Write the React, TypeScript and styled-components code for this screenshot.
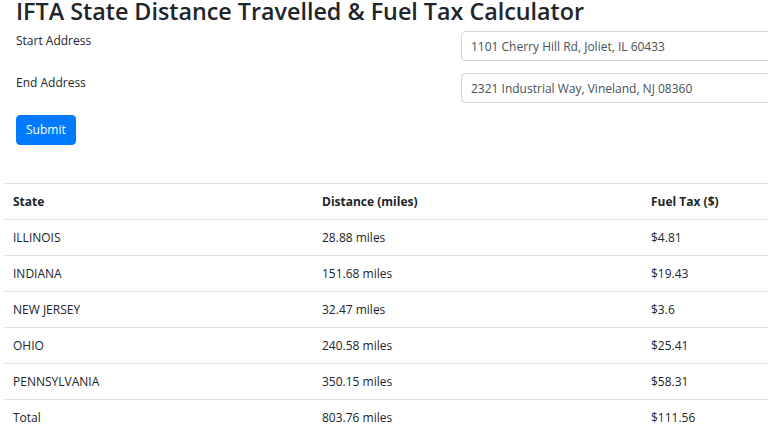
import styled, { createGlobalStyle } from 'styled-components'

const GlobalStyle = createGlobalStyle`
  html, body {
    margin: 0;
    padding: 0;
    background: #fff;
    overflow: hidden;
  }
  body {
    font-family: "Open Sans", "Noto Sans", sans-serif;
    font-size: 12px;
    line-height: 1.5;
    color: #212529;
  }
  * {
    box-sizing: border-box;
  }
`

const Page = styled.div`
  width: 800px;
`

const Header = styled.div`
  padding: 0 16px;
`

const Title = styled.h1`
  margin: 0;
  font-size: 23.3px;
  font-weight: 600;
  line-height: 1;
  white-space: nowrap;
`

const Form = styled.form`
  display: flex;
  flex-direction: column;
  gap: 12px;
  margin-top: 8px;
`

const FieldRow = styled.div`
  display: grid;
  grid-template-columns: 445px 1fr;
  align-items: start;
`

const Label = styled.label`
  padding-top: 1px;
  line-height: 18px;
`

const Input = styled.input`
  width: 340px;
  height: 30px;
  padding: 0 9px;
  border: 1px solid #ced4da;
  border-radius: 4px;
  font: inherit;
  color: #495057;
`

const Button = styled.button`
  align-self: flex-start;
  height: 30px;
  padding: 0 9px;
  border: 1px solid #007bff;
  border-radius: 4px;
  background: #007bff;
  color: #fff;
  font: inherit;
`

const Table = styled.table`
  margin: 38px 0 0 4px;
  width: 796px;
  border-collapse: collapse;
`

const Cell = styled.td<{ $w?: number }>`
  width: ${(p) => (p.$w ? `${p.$w}px` : 'auto')};
  padding: 9px 9px 8px;
  border-top: 1px solid #dee2e6;
  text-align: left;
  vertical-align: top;
  line-height: 18px;
`

const HeadCell = styled(Cell).attrs({ as: 'th' })`
  font-weight: 700;
  border-bottom: 1px solid #dee2e6;
`

const rows = [
  ['ILLINOIS', '28.88 miles', '$4.81'],
  ['INDIANA', '151.68 miles', '$19.43'],
  ['NEW JERSEY', '32.47 miles', '$3.6'],
  ['OHIO', '240.58 miles', '$25.41'],
  ['PENNSYLVANIA', '350.15 miles', '$58.31'],
  ['Total', '803.76 miles', '$111.56'],
]

export default function App() {
  return (
    <Page>
      <GlobalStyle />
      <Header>
        <Title>IFTA State Distance Travelled &amp; Fuel Tax Calculator</Title>
        <Form onSubmit={(e) => e.preventDefault()}>
          <FieldRow>
            <Label htmlFor="start">Start Address</Label>
            <Input id="start" defaultValue="1101 Cherry Hill Rd, Joliet, IL 60433" />
          </FieldRow>
          <FieldRow>
            <Label htmlFor="end">End Address</Label>
            <Input id="end" defaultValue="2321 Industrial Way, Vineland, NJ 08360" />
          </FieldRow>
          <Button type="submit">Submit</Button>
        </Form>
      </Header>
      <Table>
        <thead>
          <tr>
            <HeadCell $w={309}>State</HeadCell>
            <HeadCell $w={329}>Distance (miles)</HeadCell>
            <HeadCell>Fuel Tax ($)</HeadCell>
          </tr>
        </thead>
        <tbody>
          {rows.map((r) => (
            <tr key={r[0]}>
              <Cell>{r[0]}</Cell>
              <Cell>{r[1]}</Cell>
              <Cell>{r[2]}</Cell>
            </tr>
          ))}
        </tbody>
      </Table>
    </Page>
  )
}
